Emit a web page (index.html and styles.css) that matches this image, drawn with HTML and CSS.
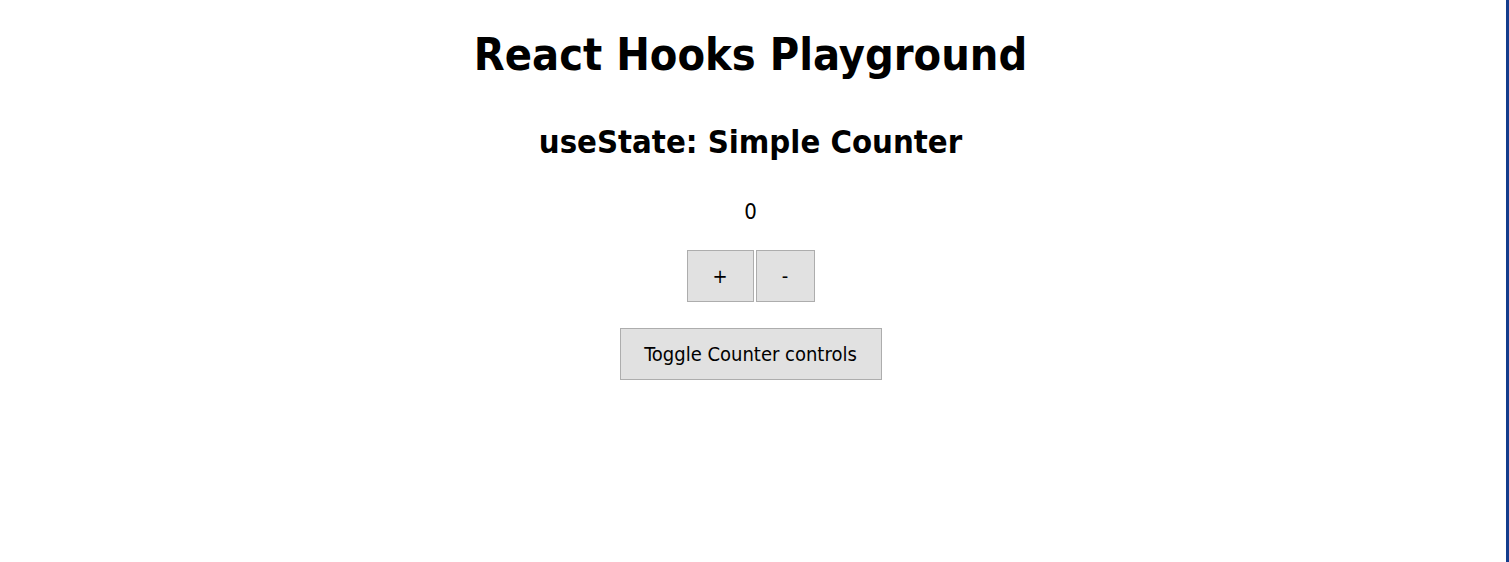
FILE: index.html
```html
<!DOCTYPE html>
<html>
<head>
<meta charset="utf-8">
<title>React Hooks Playground</title>
<link rel="stylesheet" href="styles.css">
</head>
<body>
<div class="app">
  <h1 class="title">React Hooks Playground</h1>
  <section class="counter">
    <h2 class="subtitle">useState: Simple Counter</h2>
    <p class="count">0</p>
    <div class="controls">
      <button class="btn btn-plus">+</button>
      <button class="btn btn-minus">-</button>
    </div>
    <button class="btn btn-toggle">Toggle Counter controls</button>
  </section>
</div>
</body>
</html>
```
FILE: styles.css
```css
html, body {
  margin: 0;
  padding: 0;
  background: #ffffff;
}
body {
  min-height: 100vh;
  box-sizing: border-box;
  border-right: 3px solid #143c8c;
  font-family: "DejaVu Sans Condensed", "DejaVu Sans", sans-serif;
  color: #000;
}
.app {
  text-align: center;
  padding-top: 1px;
  padding-right: 5px;
}
.title {
  font-size: 44.7px;
  line-height: 56px;
  margin: 26px 0 0;
  font-weight: bold;
}
.subtitle {
  font-size: 32.6px;
  line-height: 40px;
  margin: 39px 0 0;
  font-weight: bold;
}
.count {
  font-size: 22px;
  line-height: 26px;
  margin: 37px 0 0;
}
.controls {
  display: flex;
  justify-content: center;
  gap: 2px;
  margin-top: 25px;
}
.btn {
  font-family: inherit;
  font-size: 20px;
  background: #e1e1e1;
  border: 1px solid #adadad;
  color: #000;
  height: 52px;
  padding: 0;
  border-radius: 0;
}
.btn-plus { width: 67px; }
.btn-minus { width: 59px; }
.btn-toggle {
  margin-top: 26px;
  width: 262px;
}
```
